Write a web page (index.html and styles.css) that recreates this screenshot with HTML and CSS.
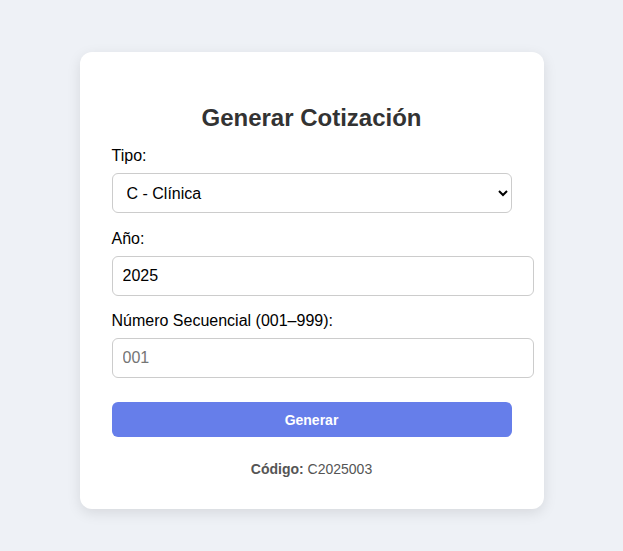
FILE: index.html
```html
<!DOCTYPE html>
<html lang="es">
<head>
<meta charset="utf-8">
<title>Generar Cotización</title>
<link rel="stylesheet" href="styles.css">
</head>
<body>
<div class="card">
  <h2 class="title">Generar Cotización</h2>
  <label class="label" for="tipo">Tipo:</label>
  <select class="field select" id="tipo">
    <option>C - Clínica</option>
  </select>
  <label class="label" for="anio">Año:</label>
  <input class="field input" id="anio" type="text" value="2025">
  <label class="label" for="num">Número Secuencial (001–999):</label>
  <input class="field input" id="num" type="text" placeholder="001">
  <button class="btn" type="button">Generar</button>
  <p class="result"><strong>Código:</strong> C2025003</p>
</div>
</body>
</html>
```
FILE: styles.css
```css
html, body {
  margin: 0;
  padding: 0;
}
body {
  background: #eef1f6;
  font-family: "Liberation Sans", Arial, sans-serif;
  display: flex;
  justify-content: center;
  padding-top: 52px;
  min-height: 551px;
  box-sizing: border-box;
}
.card {
  width: 400px;
  background: #fff;
  border-radius: 12px;
  padding: 32px 32px 32px;
  box-shadow: 0 4px 14px rgba(0, 0, 0, 0.1);
  align-self: flex-start;
}
.title {
  text-align: center;
  color: #333;
  font-size: 24px;
  margin: 20px 0 15px;
}
.label {
  display: block;
  font-size: 16px;
  color: #000;
  margin-bottom: 8px;
}
.field {
  display: block;
  width: 100%;
  padding: 10px;
  font-size: 16px;
  font-family: "Liberation Sans", Arial, sans-serif;
  border: 1px solid #ccc;
  border-radius: 6px;
  margin-bottom: 16px;
  background: #fff;
  color: #000;
}
.input {
  box-sizing: content-box;
}
.select {
  box-sizing: border-box;
  height: 40px;
  padding: 0 10px;
  margin-bottom: 17px;
}
.input::placeholder {
  color: #757575;
}
.btn {
  display: block;
  width: 100%;
  margin-top: 24px;
  padding: 10px;
  background: #667eea;
  color: #fff;
  border: none;
  border-radius: 6px;
  font-size: 14px;
  font-weight: bold;
  font-family: "Liberation Sans", Arial, sans-serif;
  height: 35px;
}
.result {
  text-align: center;
  font-size: 14px;
  color: #555;
  margin: 24px 0 0;
}
```
